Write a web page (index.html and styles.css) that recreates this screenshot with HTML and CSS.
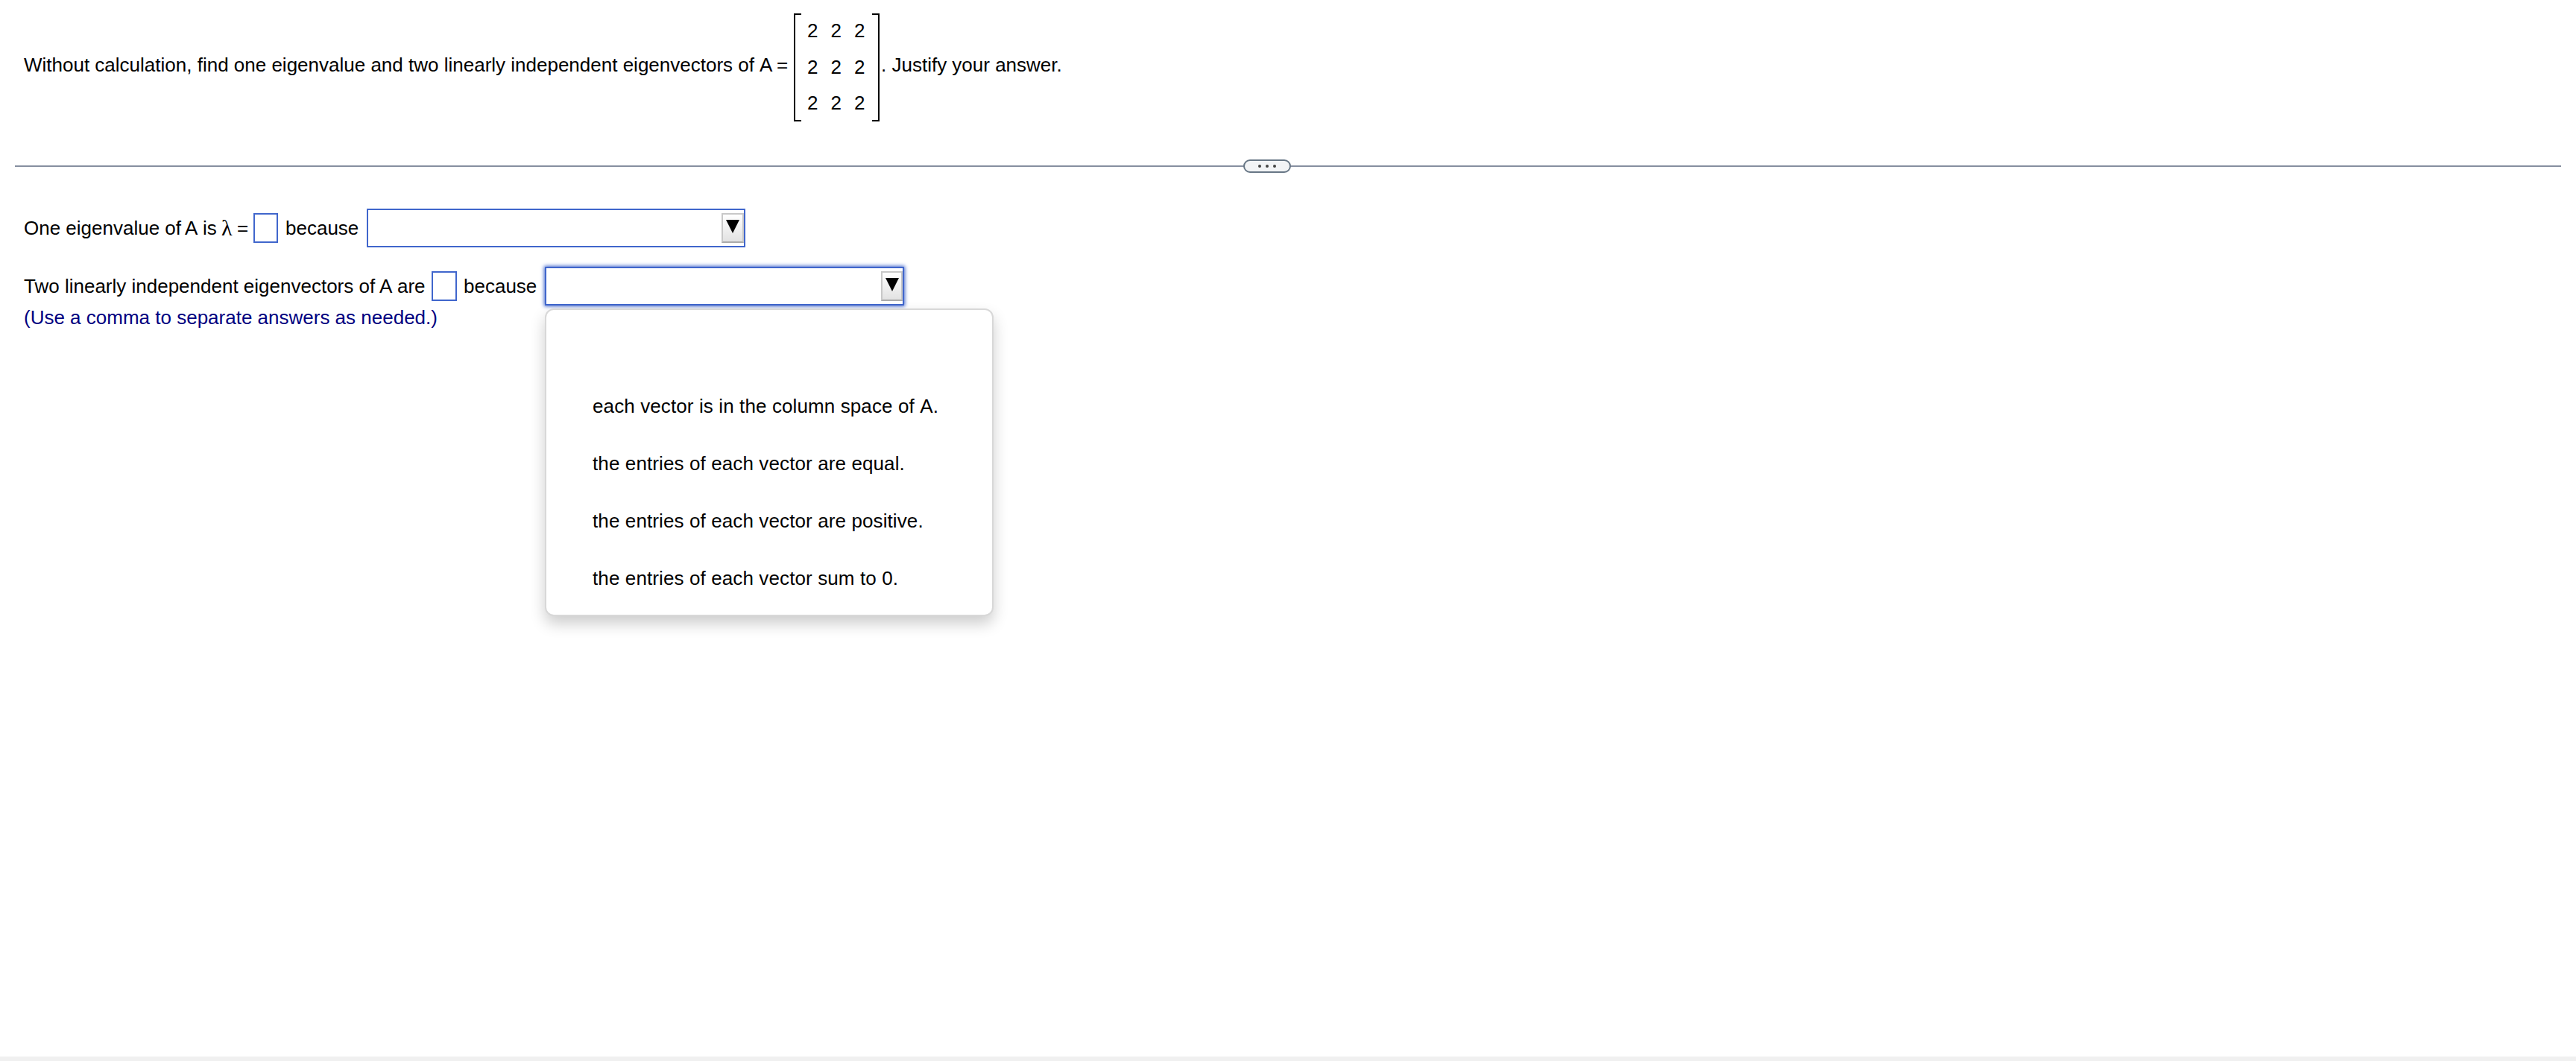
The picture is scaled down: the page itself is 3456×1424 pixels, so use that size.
FILE: index.html
```html
<!DOCTYPE html>
<html lang="en">
<head>
<meta charset="utf-8">
<title>Eigenvalue question</title>
<link rel="stylesheet" href="styles.css">
</head>
<body>
<main class="page">
  <section class="question">
    <span class="lead">Without calculation, find one eigenvalue and two linearly independent eigenvectors of</span>
    <span class="sym sym-a">A</span>
    <span class="sym sym-eq">=</span>
    <div class="matrix">
      <span>2</span><span>2</span><span>2</span>
      <span>2</span><span>2</span><span>2</span>
      <span>2</span><span>2</span><span>2</span>
    </div>
    <span class="tail">. Justify your answer.</span>
  </section>
  <div class="divider">
    <button class="handle" aria-label="Expand"><i></i><i></i><i></i></button>
  </div>
  <section class="answers">
    <div class="row">
      <span class="w-one">One eigenvalue of</span>
      <span class="w-a">A</span>
      <span class="w-is">is</span>
      <span class="lambda">λ</span>
      <span class="w-eq">=</span>
      <span class="blank"></span>
      <span class="because">because</span>
      <div class="select">
        <span class="arrow"><svg width="18" height="18" viewBox="0 0 18 18"><path d="M0 0H18L9 18Z"/></svg></span>
      </div>
    </div>
    <div class="row row-second">
      <span class="w-two">Two linearly independent eigenvectors of</span>
      <span class="w-a">A</span>
      <span class="w-are">are</span>
      <span class="blank blank-wide"></span>
      <span class="because because-second">because</span>
      <div class="select select-open">
        <span class="arrow"><svg width="18" height="18" viewBox="0 0 18 18"><path d="M0 0H18L9 18Z"/></svg></span>
        <ul class="menu">
          <li></li>
          <li>each vector is in the column space of A.</li>
          <li>the entries of each vector are equal.</li>
          <li>the entries of each vector are positive.</li>
          <li>the entries of each vector sum to 0.</li>
        </ul>
      </div>
    </div>
    <p class="hint">(Use a comma to separate answers as needed.)</p>
  </section>
  <footer class="footer"></footer>
</main>
</body>
</html>
```
FILE: styles.css
```css
* { box-sizing: border-box; }
body {
  margin: 0;
  background: #fff;
  color: #000;
  font: 26px/30px "Liberation Sans", Arial, sans-serif;
}
.page {
  display: flex;
  flex-direction: column;
  height: 1424px;
  overflow: hidden;
}
.page span { white-space: nowrap; flex: none; }
.question {
  display: flex;
  align-items: center;
  height: 214px;
  padding: 18px 0 51px 32px;
}
.lead, .sym, .tail { padding-bottom: 7px; }
.lead { width: 987px; }
.sym-a { width: 23px; }
.sym-eq { width: 23px; }
.matrix {
  display: grid;
  grid-template-columns: repeat(3, 31.5px);
  grid-auto-rows: 48.5px;
  width: 115px;
  height: 145px;
  padding: 8px 0 0 18px;
  background:
    linear-gradient(#000, #000) 0 0 / 10px 2px,
    linear-gradient(#000, #000) 0 100% / 10px 2px,
    linear-gradient(#000, #000) 100% 0 / 10px 2px,
    linear-gradient(#000, #000) 100% 100% / 10px 2px,
    linear-gradient(#000, #000) 0 0 / 2px 100%,
    linear-gradient(#000, #000) 100% 0 / 2px 100%;
  background-repeat: no-repeat;
}
.tail { margin-left: 2px; }
.divider {
  display: flex;
  justify-content: center;
  height: 18px;
  margin: 0 20px;
  padding-right: 56px;
  background: linear-gradient(#868fa0, #868fa0) 0 8px / 100% 2px no-repeat;
}
.handle {
  display: flex;
  align-items: center;
  justify-content: center;
  gap: 6px;
  width: 64px;
  height: 18px;
  padding: 0;
  border: 2px solid #687786;
  border-radius: 9px;
  background: #f2f4f6;
}
.handle i { width: 4px; height: 4px; border-radius: 50%; background: #444; }
.answers { flex: 1; padding: 48px 0 0 32px; }
.row { display: flex; align-items: center; height: 52px; }
.row-second { margin-top: 26px; }
.w-one { width: 216px; }
.w-two { width: 477px; }
.w-a { width: 24px; }
.w-is { width: 25px; }
.lambda { width: 21px; font-family: "Liberation Serif", serif; font-size: 30px; }
.w-eq { width: 22px; }
.w-are { width: 46px; }
.blank { width: 33px; height: 40px; border: 2px solid #4066cc; }
.blank-wide { width: 34px; }
.because { width: 109px; margin-left: 10px; }
.because-second { margin-left: 9px; }
.select {
  position: relative;
  display: flex;
  justify-content: flex-end;
  width: 508px;
  height: 52px;
  padding-top: 4px;
  border: 2px solid #4066cc;
}
.select-open { width: 482px; box-shadow: 0 0 5px 1px #4066cc; }
.arrow {
  display: flex;
  justify-content: center;
  width: 30px;
  height: 40px;
  padding-top: 7px;
  border: 2px solid #c8c8c8;
  border-bottom-color: #aaa;
  background: linear-gradient(#fff, #e2e2e2);
}
.select-open .arrow { width: 29px; }
.menu {
  position: absolute;
  top: 54px;
  left: -2px;
  width: 602px;
  height: 413px;
  margin: 0;
  padding: 12px 0 0 62px;
  list-style: none;
  border: 2px solid #d8d8d8;
  border-radius: 12px;
  background: #fff;
  box-shadow: 0 10px 20px rgba(0, 0, 0, .2);
  font-kerning: none;
  letter-spacing: .11px;
}
.menu li { height: 77px; padding-top: 25px; white-space: nowrap; }
.hint { margin: 1px 0 0; color: #000080; }
.footer { height: 6px; background: #f0f0f0; }
```
